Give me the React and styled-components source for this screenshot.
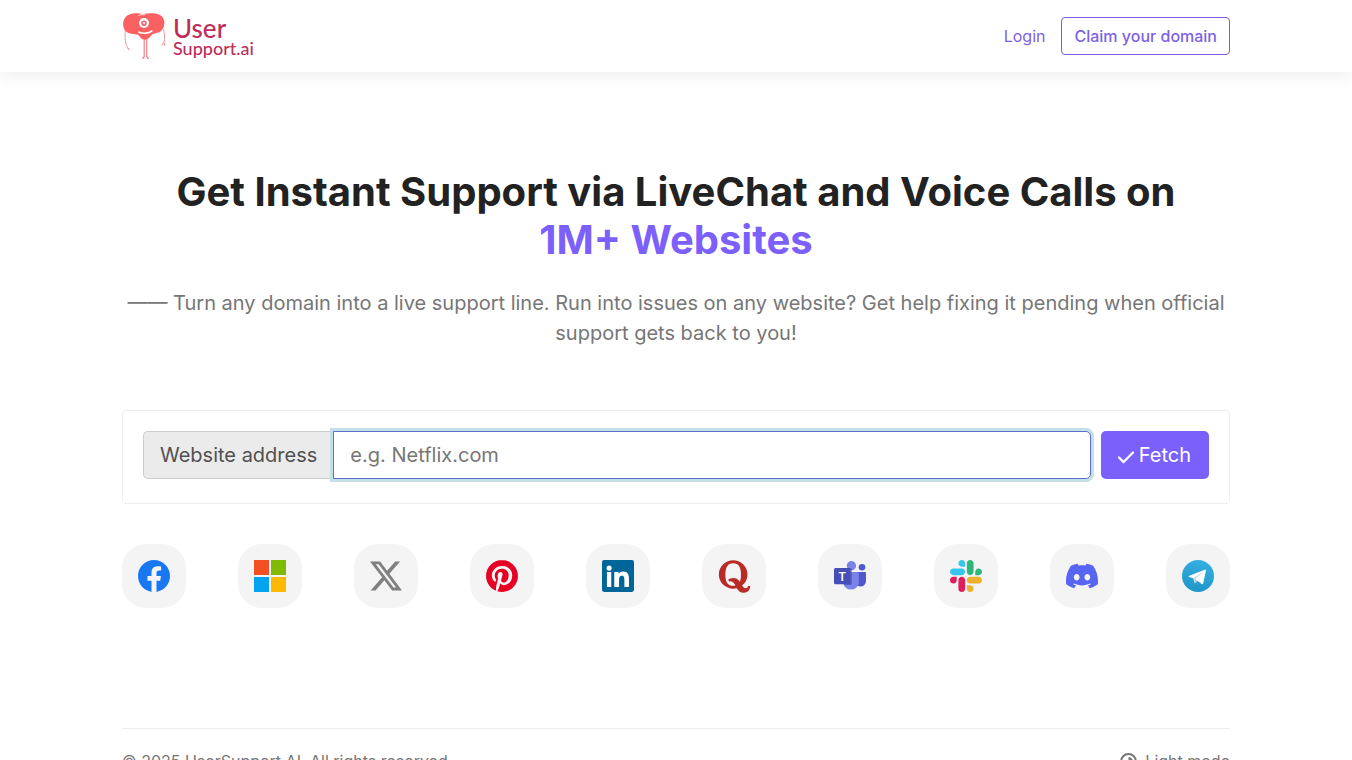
import React from "react";
import styled, { createGlobalStyle } from "styled-components";
import { SiX, SiPinterest, SiDiscord } from "react-icons/si";
import { FaQuora } from "react-icons/fa";

const GlobalStyle = createGlobalStyle`
  *, *::before, *::after { box-sizing: border-box; }
  body {
    margin: 0;
    background: #fff;
    color: #767676;
    font-family: Inter, "Liberation Sans", sans-serif;
    font-size: 16px;
    line-height: 24px;
  }
`;

const Container = styled.div`
  width: 100%;
  max-width: 1140px;
  margin: 0 auto;
  padding: 0 16px;
`;

const Header = styled.header`
  background: #fff;
  box-shadow: 0 4px 16px rgba(0, 0, 0, 0.07);
`;

const Bar = styled(Container)`
  display: flex;
  align-items: center;
  justify-content: space-between;
  height: 72px;
`;

const Brand = styled.a`
  display: flex;
  align-items: center;
  gap: 7px;
  color: #bd2f5b;
  text-decoration: none;
`;

const BrandText = styled.span`
  display: flex;
  flex-direction: column;
  font-family: Lato, "Liberation Sans", sans-serif;
  font-weight: 500;
`;

const BrandTop = styled.span`
  font-size: 26px;
  line-height: 24px;
`;

const BrandBottom = styled.span`
  font-size: 18px;
  line-height: 16px;
`;

const Nav = styled.nav`
  display: flex;
  align-items: center;
  gap: 16px;
`;

const NavLink = styled.a`
  color: #7d5fe6;
  text-decoration: none;
`;

const ClaimLink = styled(NavLink)`
  padding: 6px 12px;
  border: 1px solid #7a5cdf;
  border-radius: 4px;
  font-weight: 500;
`;

const Hero = styled.section`
  padding-top: 96px;
  text-align: center;
`;

const Title = styled.h1`
  margin: 0;
  color: #222;
  font-size: 40px;
  line-height: 48px;
  font-weight: 700;
`;

const Accent = styled.span`
  display: block;
  color: #7b60fb;
`;

const Lead = styled.p`
  margin: 24px 0 0;
  color: #767676;
  font-size: 20px;
  line-height: 30px;
`;

const SearchCard = styled.form`
  display: flex;
  gap: 10px;
  margin-top: 62px;
  padding: 20px 20px 24px;
  border: 1px solid #eee;
  border-radius: 4px;
  font-size: 20px;
  line-height: 30px;
`;

const InputGroup = styled.div`
  display: flex;
  flex: 1;
  min-width: 0;
`;

const Prefix = styled.label`
  padding: 8px 16px;
  border: 1px solid #ccc;
  border-right: 0;
  border-radius: 5px 0 0 5px;
  background: #ebebeb;
  color: #505050;
  white-space: nowrap;
`;

const AddressInput = styled.input`
  flex: 1;
  min-width: 0;
  height: 48px;
  padding: 8px 16px;
  border: 1px solid #5a6fd0;
  border-radius: 0 5px 5px 0;
  outline: 0;
  box-shadow: 0 0 0 3px #c5dfe6;
  background: #fff;
  color: #505050;
  font: inherit;
  &::placeholder { color: #767676; opacity: 1; }
`;

const FetchButton = styled.button`
  display: flex;
  align-items: center;
  gap: 4px;
  height: 48px;
  padding: 0 18px 0 16px;
  border: 0;
  border-radius: 5px;
  background: #7b60fb;
  color: #fff;
  font: inherit;
  svg { margin-top: 4px; }
`;

const Sites = styled.ul`
  display: flex;
  justify-content: space-between;
  margin: 40px 0 0;
  padding: 0;
  list-style: none;
`;

const SiteLink = styled.a`
  display: flex;
  align-items: center;
  justify-content: center;
  width: 64px;
  height: 64px;
  border-radius: 24px;
  background: #f4f4f4;
  color: ${(p) => p.$tint || "inherit"};
`;

const Footer = styled.footer`
  display: flex;
  justify-content: space-between;
  margin-top: 120px;
  padding: 20px 0 24px;
  border-top: 1px solid #eee;
`;

const ModeButton = styled.button`
  display: flex;
  align-items: center;
  gap: 8px;
  padding: 0;
  border: 0;
  background: none;
  color: #767676;
  font: inherit;
`;

const Mascot = () => (
  <svg width="44" height="48" viewBox="0 0 44 48" fill="none" aria-hidden="true">
    <path d="M3.4 18C2.5 25 3.2 33 6.8 37.6" stroke="#f29a9f" strokeWidth="1" />
    <path d="M5.500 36l2.300 2.200M41.500 30.500l-2 3M42.300 31v3" stroke="#ec9097" strokeWidth="1" />
    <path d="M41.500 17c1.200 5 1.400 9 .600 14.500" stroke="#f29a9f" strokeWidth="1" />
    <path d="M22.200 27v18M24.700 27v18" stroke="#f0858d" strokeWidth="1.200" />
    <path d="M19.800 46.800l2.500-3v3zM27.300 46.800l-2.500-3v3z" fill="#ee7780" />
    <path d="M21 2C13 .400 5.500 1.500 2.300 7 .200 11 .900 16.500 4.200 19.700c3.300 2.600 8 2.100 11.200 2.900 2 .600 3 5 7.700 5.200 3.900 0 5.200-4.200 7.600-5.500 2.500-1.400 6.500-.800 9.300-4.200 2.900-3.600 3.200-9.300.700-12.700C37.500.500 28.500.700 21 2z" fill="#fb6163" />
    <path d="M16.500 3.600c2-1 4.500-1.200 6.500-.800" stroke="#fff" strokeWidth="0.800" />
    <circle cx="22" cy="11" r="5" fill="#fff" />
    <circle cx="22" cy="11.200" r="2.800" fill="#f06d76" />
    <circle cx="22" cy="11" r="1" fill="#fff" />
    <path d="M17 20.200c4 1.600 10 1.300 12.800-1.400" stroke="#fff" strokeWidth="1.600" strokeLinecap="round" />
  </svg>
);

const Facebook = () => (
  <svg width="32" height="32" viewBox="0 0 24 24" aria-hidden="true">
    <path fill="#1877f2" d="M24 12.073c0-6.627-5.373-12-12-12s-12 5.373-12 12c0 5.990 4.388 10.954 10.125 11.854v-8.385H7.078v-3.470h3.047V9.430c0-3.007 1.792-4.669 4.533-4.669 1.312 0 2.686.235 2.686.235v2.953H15.830c-1.491 0-1.956.925-1.956 1.874v2.250h3.328l-.532 3.470h-2.796v8.385C19.612 23.027 24 18.062 24 12.073z" />
  </svg>
);

const Check = () => (
  <svg width="18" height="18" viewBox="0 0 18 18" fill="none" aria-hidden="true">
    <path d="M2 9.500l4.600 4.600L16 4.500" stroke="currentColor" strokeWidth="2.200" strokeLinecap="round" strokeLinejoin="round" />
  </svg>
);

const ModeIcon = () => (
  <svg width="17" height="17" viewBox="0 0 17 17" fill="none" aria-hidden="true">
    <circle cx="8.500" cy="8.500" r="7.500" stroke="currentColor" strokeWidth="2" />
    <path d="M8.500 4a4.500 4.500 0 1 1-3.200 7.700L8.500 8.500z" fill="currentColor" />
  </svg>
);

const Microsoft = () => (
  <svg width="32" height="32" viewBox="0 0 32 32" aria-hidden="true">
    <path fill="#f25022" d="M0 0h15v15H0z" />
    <path fill="#80ba01" d="M17 0h15v15H17z" />
    <path fill="#02a4ef" d="M0 17h15v15H0z" />
    <path fill="#ffb902" d="M17 17h15v15H17z" />
  </svg>
);

const LinkedIn = () => (
  <svg width="32" height="32" viewBox="0 0 24 24" aria-hidden="true">
    <rect width="24" height="24" rx="1.600" fill="#006699" />
    <path fill="#fff" d="M3.700 9h3.250v11.200H3.700zM5.340 4.200a1.900 1.900 0 1 1 0 3.800 1.900 1.900 0 0 1 0-3.800zM9.200 9h3.250v1.560h.05c.480-.900 1.640-1.850 3.370-1.850 3.600 0 4.360 2.370 4.360 5.460v6.030h-3.450v-5.320c0-1.330-.030-3.040-1.850-3.040-1.860 0-2.140 1.450-2.140 2.940v5.420H9.200z" />
  </svg>
);

const Slack = () => (
  <svg width="32" height="32" viewBox="0 0 122.800 122.800" aria-hidden="true">
    <path fill="#e01e5a" d="M25.800 77.600c0 7.100-5.800 12.900-12.900 12.900S0 84.700 0 77.600s5.800-12.900 12.900-12.900h12.900zm6.500 0c0-7.100 5.800-12.900 12.900-12.900s12.900 5.800 12.900 12.900v32.300c0 7.100-5.800 12.900-12.900 12.900s-12.900-5.800-12.900-12.900z" />
    <path fill="#36c5f0" d="M45.200 25.800c-7.100 0-12.900-5.800-12.900-12.900S38.100 0 45.200 0s12.900 5.800 12.900 12.900v12.900zm0 6.500c7.100 0 12.900 5.800 12.900 12.900s-5.800 12.900-12.900 12.900H12.900C5.800 58.100 0 52.300 0 45.200s5.800-12.900 12.900-12.900z" />
    <path fill="#2eb67d" d="M97 45.200c0-7.100 5.800-12.900 12.900-12.900s12.900 5.800 12.900 12.900-5.800 12.900-12.900 12.900H97zm-6.500 0c0 7.100-5.800 12.900-12.900 12.900s-12.900-5.800-12.900-12.900V12.900C64.700 5.800 70.500 0 77.600 0s12.900 5.800 12.900 12.900z" />
    <path fill="#ecb22e" d="M77.600 97c7.100 0 12.900 5.800 12.900 12.900s-5.800 12.900-12.900 12.900-12.900-5.800-12.900-12.900V97zm0-6.500c-7.100 0-12.900-5.800-12.900-12.900s5.800-12.900 12.900-12.900h32.300c7.100 0 12.900 5.800 12.900 12.900s-5.800 12.900-12.900 12.900z" />
  </svg>
);

const Teams = () => (
  <svg width="32" height="32" viewBox="0 0 32 32" aria-hidden="true">
    <circle cx="28" cy="7.300" r="3.300" fill="#5059c9" />
    <path fill="#5059c9" d="M22.500 12H31a1 1 0 0 1 1 1v8a5.500 5.500 0 0 1-5.500 5.500c-2 0-4-1-4-3z" />
    <circle cx="17.400" cy="5.700" r="4.700" fill="#7b83eb" />
    <path fill="#7b83eb" d="M10 12h13.700a1.100 1.100 0 0 1 1.100 1.100v9.800a7.900 7.900 0 0 1-15.600 0V12z" />
    <path fill="#3c4394" opacity="0.5" d="M9.200 12V8h7.300a1.400 1.400 0 0 1 1.400 1.400v14.200a1.400 1.400 0 0 1-1.400 1.400H9.900z" />
    <rect y="8" width="16.600" height="16.200" rx="1.500" fill="#464eb8" />
    <text x="8.300" y="20.600" textAnchor="middle" fill="#fff" fontFamily="Open Sans, sans-serif" fontWeight="600" fontSize="13">T</text>
  </svg>
);

const Telegram = () => (
  <svg width="32" height="32" viewBox="0 0 240 240" aria-hidden="true">
    <defs>
      <linearGradient id="telegramSky" x1="0.6" y1="0" x2="0.4" y2="1">
        <stop offset="0" stopColor="#37aee2" />
        <stop offset="1" stopColor="#1e96c8" />
      </linearGradient>
    </defs>
    <circle cx="120" cy="120" r="120" fill="url(#telegramSky)" />
    <path fill="#c8daea" d="M98 175c-3.900 0-3.200-1.500-4.600-5.200L82 132.200 152.800 88l8.300 2.200-6.900 18.800z" />
    <path fill="#a9c9dd" d="M98 175c3 0 4.300-1.400 6-3l16-15.600-20-12z" />
    <path fill="#fff" d="M100 144.400l48.400 35.700c5.500 3 9.500 1.500 10.900-5.100L179 82.200c2-8.100-3.100-11.700-8.400-9.300L55 117.500c-7.900 3.200-7.800 7.600-1.400 9.500l29.700 9.300L152 93c3.200-2 6.200-.900 3.800 1.300z" />
  </svg>
);

const SITES = [
  { name: "Facebook", icon: <Facebook /> },
  { name: "Microsoft", icon: <Microsoft /> },
  { name: "X", tint: "#808080", icon: <SiX size={32} /> },
  { name: "Pinterest", tint: "#e60023", icon: <SiPinterest size={32} /> },
  { name: "LinkedIn", icon: <LinkedIn /> },
  { name: "Quora", tint: "#b92b27", icon: <FaQuora size={37} /> },
  { name: "Microsoft Teams", icon: <Teams /> },
  { name: "Slack", icon: <Slack /> },
  { name: "Discord", tint: "#5865f2", icon: <SiDiscord size={32} /> },
  { name: "Telegram", icon: <Telegram /> },
];

export default function App() {
  return (
    <>
      <GlobalStyle />
      <Header>
        <Bar>
          <Brand href="#home">
            <Mascot />
            <BrandText>
              <BrandTop>User</BrandTop>
              <BrandBottom>Support.ai</BrandBottom>
            </BrandText>
          </Brand>
          <Nav>
            <NavLink href="#login">Login</NavLink>
            <ClaimLink href="#claim">Claim your domain</ClaimLink>
          </Nav>
        </Bar>
      </Header>
      <Container>
        <main>
          <Hero>
            <Title>
              Get Instant Support via LiveChat and Voice Calls on <Accent>1M+ Websites</Accent>
            </Title>
            <Lead>
              —— Turn any domain into a live support line. Run into issues on any website? Get help
              fixing it pending when official support gets back to you!
            </Lead>
          </Hero>
          <SearchCard onSubmit={(e) => e.preventDefault()}>
            <InputGroup>
              <Prefix htmlFor="address">Website address</Prefix>
              <AddressInput id="address" type="text" placeholder="e.g. Netflix.com" />
            </InputGroup>
            <FetchButton type="submit">
              <Check />
              Fetch
            </FetchButton>
          </SearchCard>
          <Sites>
            {SITES.map((s) => (
              <li key={s.name}>
                <SiteLink href="#site" aria-label={s.name} $tint={s.tint}>
                  {s.icon}
                </SiteLink>
              </li>
            ))}
          </Sites>
        </main>
        <Footer>
          <span>© 2025 UserSupport AI. All rights reserved.</span>
          <ModeButton type="button">
            <ModeIcon />
            Light mode
          </ModeButton>
        </Footer>
      </Container>
    </>
  );
}
